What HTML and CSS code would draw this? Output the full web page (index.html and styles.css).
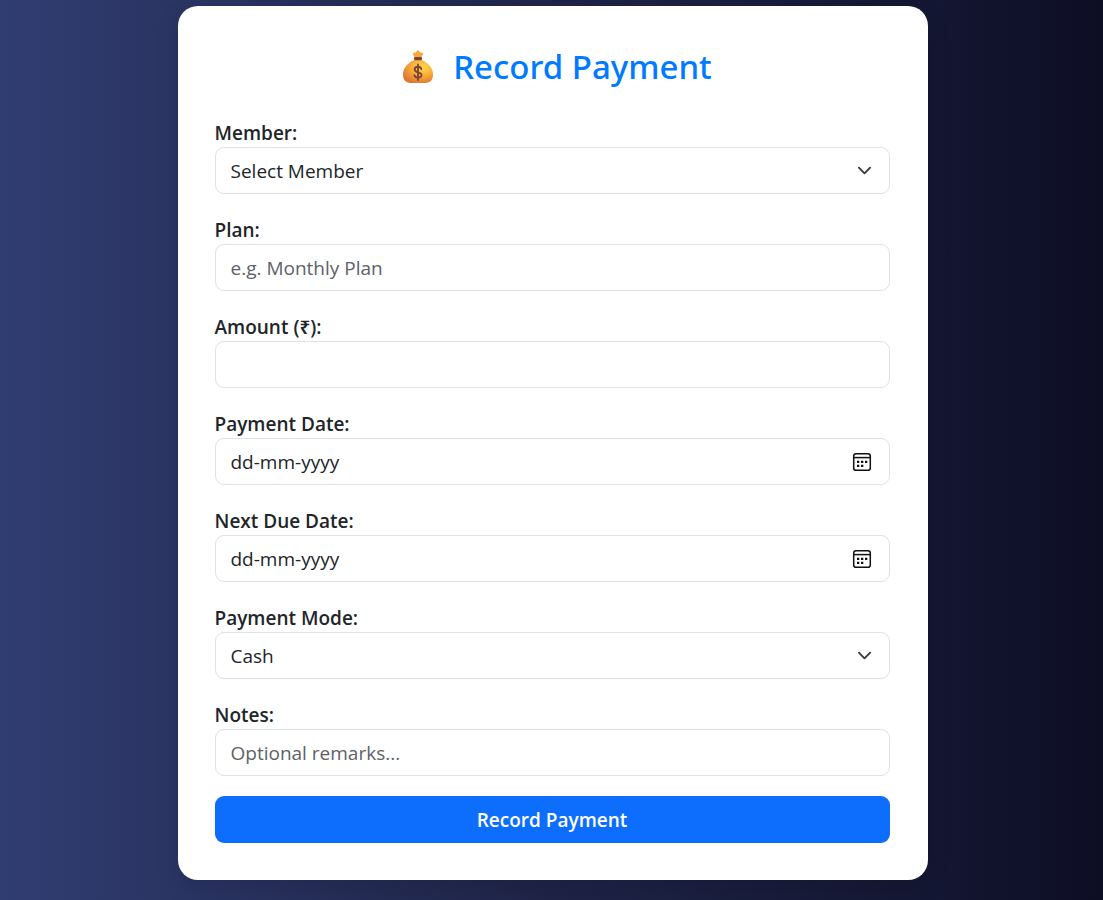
FILE: index.html
```html
<!DOCTYPE html>
<html lang="en">
<head>
<meta charset="utf-8">
<meta name="viewport" content="width=device-width, initial-scale=1">
<title>Record Payment</title>
<link rel="stylesheet" href="styles.css">
</head>
<body>
<svg class="defs" aria-hidden="true">
  <symbol id="calendar" viewBox="0 0 20 20">
    <rect x="1.7" y="1.7" width="16.600" height="16.600" rx="2.400" fill="none" stroke="#111" stroke-width="1.500"/>
    <path d="M2 5.600h16" stroke="#111" stroke-width="1.500"/>
    <path d="M5 8.800h2.300v2.300H5zM9 8.800h2.300v2.300H9zM13 8.800h2.300v2.300H13zM5 12.800h2.300v2.300H5zM9 12.800h2.300v2.300H9z" fill="#111"/>
  </symbol>
</svg>
<main class="card">
  <h1 class="title">
    <svg class="bag" viewBox="0 0 36 40" aria-hidden="true">
      <defs>
        <radialGradient id="bagFill" cx=".66" cy=".3" r=".75">
          <stop offset="0" stop-color="#ffd84f"/>
          <stop offset=".5" stop-color="#f9ae39"/>
          <stop offset="1" stop-color="#df7632"/>
        </radialGradient>
      </defs>
      <path d="M15 11 13 7.500q-.8-1.500.8-1.800l2-.2L17.300 3.600q.7-.9 1.400 0l1.500 1.900 2 .2q1.600.3.800 1.800L21 11z" fill="#f7a93b"/>
      <path d="M14.500 13C8 15.500 3 21 3 27.500 3 33.500 6 36 12 36h12c6 0 9-2.500 9-8.500C33 21 28 15.500 21.500 13z" fill="url(#bagFill)"/>
      <rect x="14" y="10" width="8" height="3.300" rx="1.300" fill="#7d4537"/>
      <path d="M18 17.500v15.500M21.300 22c-.6-3-6.600-3.100-6.600.4 0 3.800 6.800 2 6.800 5.700 0 3.600-6.400 3.300-7.100.2" fill="none" stroke="#7d4537" stroke-width="1.900" stroke-linecap="round"/>
    </svg>
    <span>Record Payment</span>
  </h1>
  <form class="form">
    <div class="field">
      <label for="member">Member:</label>
      <select id="member" class="control select"><option>Select Member</option></select>
    </div>
    <div class="field">
      <label for="plan">Plan:</label>
      <input id="plan" class="control" type="text" placeholder="e.g. Monthly Plan">
    </div>
    <div class="field">
      <label for="amount">Amount (₹):</label>
      <input id="amount" class="control" type="text" inputmode="decimal">
    </div>
    <div class="field">
      <label for="paid">Payment Date:</label>
      <div class="control date">
        <input id="paid" class="date-text" type="text" placeholder="dd-mm-yyyy">
        <button class="date-button" type="button" aria-label="Choose payment date"><svg class="calendar"><use href="#calendar"/></svg></button>
      </div>
    </div>
    <div class="field">
      <label for="due">Next Due Date:</label>
      <div class="control date">
        <input id="due" class="date-text" type="text" placeholder="dd-mm-yyyy">
        <button class="date-button" type="button" aria-label="Choose next due date"><svg class="calendar"><use href="#calendar"/></svg></button>
      </div>
    </div>
    <div class="field">
      <label for="mode">Payment Mode:</label>
      <select id="mode" class="control select"><option>Cash</option></select>
    </div>
    <div class="field">
      <label for="notes">Notes:</label>
      <input id="notes" class="control" type="text" placeholder="Optional remarks...">
    </div>
    <button class="submit" type="submit">Record Payment</button>
  </form>
</main>
</body>
</html>
```
FILE: styles.css
```css
* { box-sizing: border-box; }
body {
  margin: 0;
  min-height: 100vh;
  padding: 6px 16px 20px 18px;
  background: linear-gradient(to right, #303d71, #1f2448 50%, #141733 84%, #0d0d24);
  color: #212529;
  font-family: "Open Sans", "Noto Sans", sans-serif;
  font-size: 19px;
  line-height: 28px;
}
.defs { position: absolute; width: 0; height: 0; }
.card {
  max-width: 750px;
  margin: 0 auto;
  padding: 37px 38px 37px 37px;
  background: #fff;
  border-radius: 20px;
  box-shadow: 0 8px 24px rgba(0, 0, 0, .12);
}
.title {
  display: flex;
  align-items: center;
  justify-content: center;
  gap: 17px;
  margin: 0 0 26px;
  padding-left: 8px;
  color: #007bff;
  font-family: "Noto Sans", "Open Sans", sans-serif;
  font-size: 33px;
  font-weight: 500;
  line-height: 48px;
}
.bag { width: 36px; height: 40px; }
.form { display: flex; flex-direction: column; gap: 20px; }
.field { display: flex; flex-direction: column; }
label { padding-top: 2px; font-weight: 600; }
.control {
  width: 100%;
  height: 47px;
  padding: 0 15px;
  border: 1px solid #dee2e6;
  border-radius: 9px;
  background-color: #fff;
  color: #212529;
  font: inherit;
}
.control::placeholder { color: #5c6268; opacity: 1; }
.select {
  appearance: none;
  background-image: url("data:image/svg+xml,%3Csvg xmlns='http://www.w3.org/2000/svg' viewBox='0 0 16 16'%3E%3Cpath fill='none' stroke='%23343a40' stroke-linecap='round' stroke-linejoin='round' stroke-width='2' d='m2 5 6 6 6-6'/%3E%3C/svg%3E");
  background-repeat: no-repeat;
  background-position: right 17px center;
  background-size: 15px 15px;
}
.date { display: flex; align-items: center; }
.date-text {
  flex: 1;
  min-width: 0;
  padding: 0;
  border: 0;
  outline: 0;
  background: none;
  color: inherit;
  font: inherit;
}
.date-text::placeholder { color: #212529; opacity: 1; }
.date-button { display: flex; padding: 2px; border: 0; background: none; }
.calendar { width: 20px; height: 20px; }
.submit {
  height: 47px;
  border: 0;
  border-radius: 9px;
  background: #0d6efd;
  color: #fff;
  font: inherit;
  font-weight: 600;
}
```
